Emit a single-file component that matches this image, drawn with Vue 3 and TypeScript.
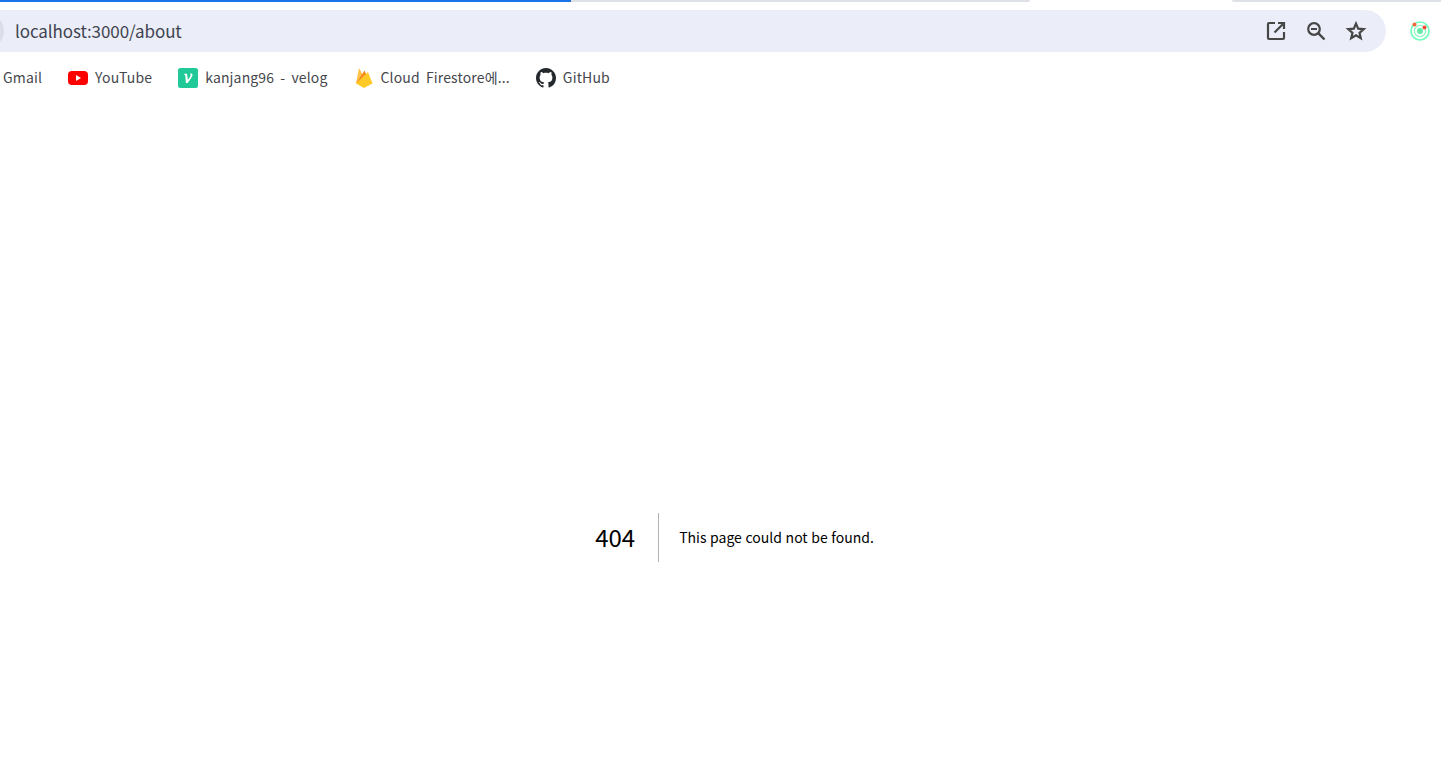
<template>
  <div class="page">
    <div class="tabstrip">
      <div class="tab-active">
        <div class="progress"></div>
      </div>
      <div class="tab-gap"></div>
      <div class="tab-next"></div>
    </div>

    <div class="toolbar">
      <div class="omnibox">
        <span class="site-chip"></span>
        <span class="url">localhost:3000/about</span>
        <div class="omni-actions">
          <svg width="24" height="24" viewBox="0 0 24 24" fill="none" stroke="#474747" stroke-width="2.2">
            <path d="M11 4H5a1 1 0 0 0-1 1v14a1 1 0 0 0 1 1h14a1 1 0 0 0 1-1v-6" />
            <path d="M14 4h6v6M20 4l-9.5 9.5" />
          </svg>
          <svg width="24" height="24" viewBox="0 0 24 24" fill="none" stroke="#474747" stroke-width="2.2">
            <circle cx="10" cy="10" r="5.800" />
            <path d="M14.200 14.200 20.500 20.500" stroke-width="2.400" />
            <path d="M7 10h6" />
          </svg>
          <svg width="24" height="24" viewBox="0 0 24 24" fill="none" stroke="#474747" stroke-width="2.2" stroke-linejoin="miter">
            <path d="M12 4.600l2.200 5.100 5.500.5-4.200 3.600 1.300 5.400L12 16.300l-4.800 2.900 1.300-5.400-4.200-3.600 5.500-.5z" />
          </svg>
        </div>
      </div>
      <svg class="extension" width="22" height="22" viewBox="0 0 22 22" fill="none">
        <circle cx="11" cy="11" r="9" stroke="#6ffdb9" stroke-width="1.600" />
        <circle cx="11" cy="11" r="5.600" stroke="#8ef8c4" stroke-width="1.300" />
        <circle cx="11" cy="11" r="3" fill="#66eaa8" />
        <circle cx="5.500" cy="4.500" r="2" fill="#f2683a" />
        <circle cx="15.500" cy="7.500" r="2" fill="#ee4a35" />
      </svg>
    </div>

    <div class="bookmarks">
      <div v-for="b in bookmarks" :key="b.label" class="bookmark" :class="b.cls">
        <svg v-if="b.icon === 'youtube'" width="20" height="20" viewBox="0 0 20 20">
          <rect x="0" y="3" width="20" height="14" rx="4" fill="#f00" />
          <path d="M8 7l5 3-5 3z" fill="#fff" />
        </svg>
        <svg v-else-if="b.icon === 'velog'" width="20" height="20" viewBox="0 0 20 20">
          <rect width="20" height="20" rx="2.500" fill="#20c997" />
          <path d="M6 6.200c1.500-.9 2.900-.9 3.200.6l.6 5 2-2.600c.9-1.200.9-2.300.3-3.400 1.100-.6 2.400-.2 2.400 1.200 0 1.300-1 2.900-4.800 8H7.900L7.300 7.600c-.1-.8-.5-1-1.100-.7z" fill="#fff" />
        </svg>
        <svg v-else-if="b.icon === 'firebase'" width="20" height="20" viewBox="0 0 20 20">
          <path d="M2 15.500 5 0l5 9z" fill="#ffc24a" />
          <path d="M2 15.500 10.500 2.500 14.500 11z" fill="#f58a1f" />
          <path d="M2 15.500 14 4l4.500 11.500-8.500 4.500z" fill="#ffca28" />
        </svg>
        <svg v-else-if="b.icon === 'github'" width="20" height="20" viewBox="0 0 16 16">
          <path fill="#24292e" d="M8 0C3.580 0 0 3.580 0 8c0 3.540 2.290 6.530 5.470 7.590.4.070.55-.17.55-.38 0-.19-.01-.82-.01-1.490-2.010.37-2.530-.49-2.690-.94-.09-.23-.48-.94-.82-1.130-.28-.15-.68-.52-.01-.53.630-.01 1.080.58 1.230.82.720 1.210 1.870.870 2.330.660.070-.520.280-.870.510-1.070-1.780-.200-3.640-.890-3.640-3.950 0-.870.310-1.590.820-2.150-.080-.200-.360-1.020.080-2.120 0 0 .670-.210 2.200.820.640-.180 1.320-.270 2-.270s1.360.090 2 .270c1.530-1.040 2.200-.820 2.200-.820.440 1.100.160 1.920.080 2.120.510.560.820 1.270.820 2.150 0 3.070-1.870 3.750-3.650 3.950.290.250.540.730.540 1.480 0 1.070-.010 1.930-.010 2.200 0 .210.150.460.550.380A8.013 8.013 0 0 0 16 8c0-4.420-3.580-8-8-8z" />
        </svg>
        <span class="bookmark-label">{{ b.label }}</span>
      </div>
    </div>

    <main class="content">
      <div class="not-found">
        <h1>404</h1>
        <h2>This page could not be found.</h2>
      </div>
    </main>
  </div>
</template>

<script setup lang="ts">
interface Bookmark {
  label: string;
  icon?: string;
  cls?: string;
}

const bookmarks: Bookmark[] = [
  { label: 'Gmail', cls: 'gmail' },
  { label: 'YouTube', icon: 'youtube' },
  { label: 'kanjang96 - velog', icon: 'velog' },
  { label: 'Cloud Firestore에...', icon: 'firebase' },
  { label: 'GitHub', icon: 'github' }
];
</script>

<style scoped>
.page {
  display: flex;
  flex-direction: column;
  height: 780px;
  overflow: hidden;
  background: #fff;
  font-family: "Noto Sans CJK KR", "Noto Sans", sans-serif;
}

.tabstrip {
  display: flex;
  height: 2px;
  flex-shrink: 0;
}

.tab-active {
  width: 1030px;
  background: #dee1e6;
  border-bottom-right-radius: 6px;
}

.progress {
  width: 571px;
  height: 2px;
  background: #1a73e8;
}

.tab-gap {
  width: 202px;
}

.tab-next {
  flex: 1;
  background: #dee1e6;
  border-bottom-left-radius: 6px;
}

.toolbar {
  display: flex;
  align-items: center;
  height: 42px;
  margin-top: 8px;
  flex-shrink: 0;
}

.omnibox {
  display: flex;
  align-items: center;
  width: 1386px;
  height: 42px;
  background: #ebeef8;
  border-radius: 0 21px 21px 0;
  overflow: hidden;
}

.site-chip {
  width: 18px;
  height: 26px;
  margin-left: -14px;
  border-radius: 50%;
  background: #d9deea;
  flex-shrink: 0;
}

.url {
  margin-left: 11px;
  padding-bottom: 2px;
  font-size: 17px;
  letter-spacing: -0.1px;
  color: #3f4450;
}

.omni-actions {
  display: flex;
  gap: 16px;
  margin-left: auto;
  margin-right: 18px;
}

.extension {
  margin-left: 23px;
}

.bookmarks {
  display: flex;
  align-items: center;
  height: 52px;
  gap: 26px;
  flex-shrink: 0;
}

.bookmark {
  display: flex;
  align-items: center;
  gap: 7px;
  font-size: 14px;
  color: #45474d;
  white-space: nowrap;
}

.bookmark-label {
  padding-bottom: 2px;
  letter-spacing: 0.15px;
  word-spacing: 2.8px;
}

.gmail {
  margin-left: 3px;
}

.content {
  flex: 1;
  display: flex;
  align-items: center;
  justify-content: center;
  padding: 190px 0 0 28px;
}

.not-found {
  display: flex;
  align-items: center;
  color: #000;
}

h1 {
  margin: 0 20px 0 0;
  padding: 9px 23px 11px 0;
  border-right: 1px solid rgba(0, 0, 0, 0.3);
  font-size: 24px;
  font-weight: 400;
  line-height: 29px;
}

h2 {
  margin: 0;
  font-size: 14px;
  font-weight: 400;
  line-height: 28px;
  word-spacing: 0.5px;
}
</style>
